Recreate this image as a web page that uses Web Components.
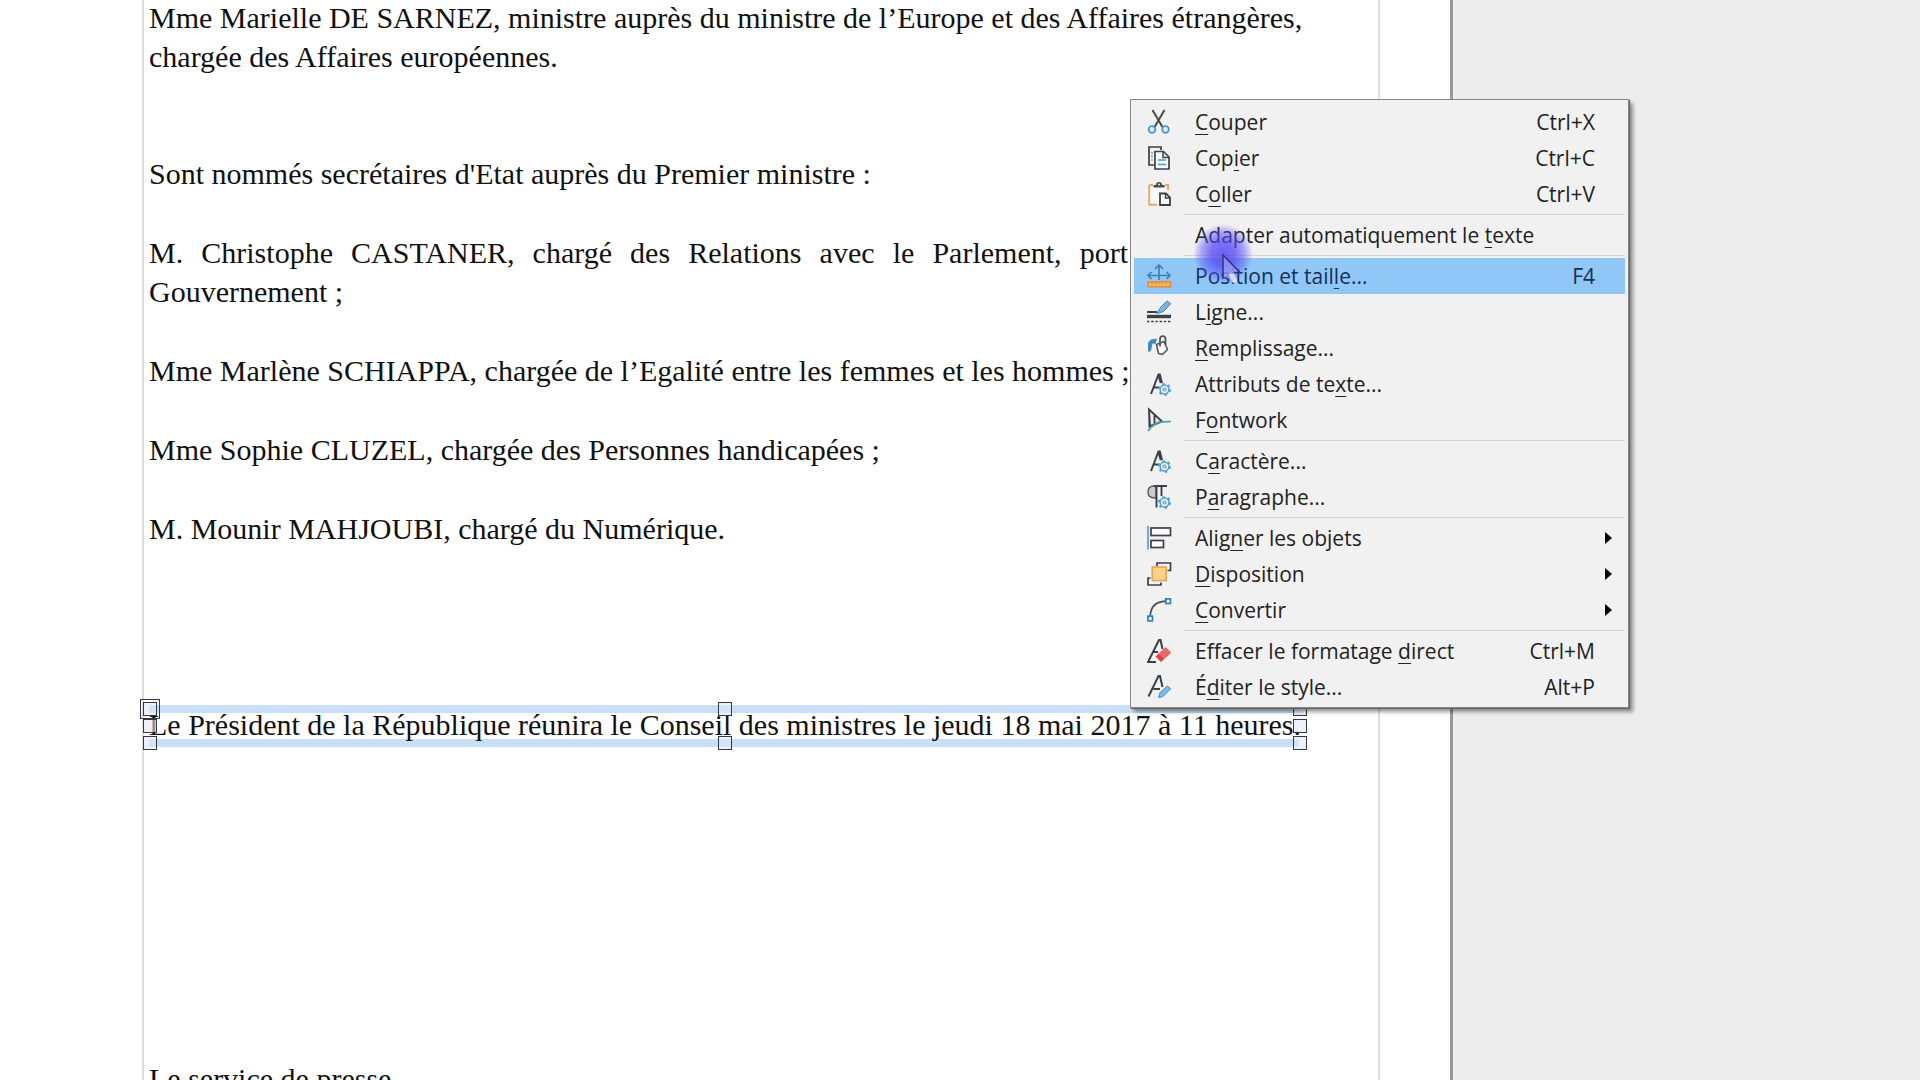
<!DOCTYPE html>
<html lang="fr">
<head>
<meta charset="utf-8">
<title>Communiqué</title>
<style>
  html, body { margin: 0; height: 100%; }
  body { overflow: hidden; background: #ededed; color: #111; }
</style>
</head>
<body>
<draw-workspace>
  <draw-page>
    <doc-paragraph>Mme Marielle DE SARNEZ, ministre auprès du ministre de l’Europe et des Affaires étrangères, chargée des Affaires européennes.</doc-paragraph>
    <doc-paragraph space="large">Sont nommés secrétaires d'Etat auprès du Premier ministre :</doc-paragraph>
    <doc-paragraph narrow>M. Christophe CASTANER, chargé des Relations avec le Parlement, port Gouvernement ;</doc-paragraph>
    <doc-paragraph>Mme Marlène SCHIAPPA, chargée de l’Egalité entre les femmes et les hommes ;</doc-paragraph>
    <doc-paragraph>Mme Sophie CLUZEL, chargée des Personnes handicapées ;</doc-paragraph>
    <doc-paragraph>M. Mounir MAHJOUBI, chargé du Numérique.</doc-paragraph>
    <selected-frame>Le Président de la République réunira le Conseil des ministres le jeudi 18 mai 2017 à 11 heures.</selected-frame>
    <doc-paragraph space="footer">Le service de presse</doc-paragraph>
  </draw-page>
  <context-menu slot="overlay">
    <menu-entry icon="cut" shortcut="Ctrl+X"><u>C</u>ouper</menu-entry>
    <menu-entry icon="copy" shortcut="Ctrl+C">Cop<u>i</u>er</menu-entry>
    <menu-entry icon="paste" shortcut="Ctrl+V">C<u>o</u>ller</menu-entry>
    <menu-line></menu-line>
    <menu-entry>Adapter automatiquement le <u>t</u>exte</menu-entry>
    <menu-line></menu-line>
    <menu-entry icon="position" shortcut="F4" active>Position et tail<u>l</u>e...</menu-entry>
    <menu-entry icon="line">L<u>i</u>gne...</menu-entry>
    <menu-entry icon="fill"><u>R</u>emplissage...</menu-entry>
    <menu-entry icon="char">Attributs de te<u>x</u>te...</menu-entry>
    <menu-entry icon="fontwork">F<u>o</u>ntwork</menu-entry>
    <menu-line></menu-line>
    <menu-entry icon="char">C<u>a</u>ractère...</menu-entry>
    <menu-entry icon="para">P<u>a</u>ragraphe...</menu-entry>
    <menu-line></menu-line>
    <menu-entry icon="align" submenu>Alig<u>n</u>er les objets</menu-entry>
    <menu-entry icon="arrange" submenu><u>D</u>isposition</menu-entry>
    <menu-entry icon="convert" submenu><u>C</u>onvertir</menu-entry>
    <menu-line></menu-line>
    <menu-entry icon="clear" shortcut="Ctrl+M">Effacer le formatage <u>d</u>irect</menu-entry>
    <menu-entry icon="style" shortcut="Alt+P">É<u>d</u>iter le style...</menu-entry>
  </context-menu>
  <mouse-pointer slot="overlay"></mouse-pointer>
</draw-workspace>
<script>
const gear = '<g fill="none" stroke="#4f9fd0"><circle cx="17.5" cy="17.5" r="4.4" stroke-width="1.5"/><circle cx="17.5" cy="17.5" r="1.5" stroke-width="1.2"/><circle cx="17.5" cy="17.5" r="5.7" stroke-width="1.8" stroke-dasharray="2.4 3.57"/></g>';
const slantA = '<path d="M4 22 L11.5 2.5 L12.8 2.5 L15 11 M7 15.5 H12.5" fill="none" stroke="#3c4148" stroke-width="2"/><path d="M11.6 2.5 L14 11" stroke="#3c4148" stroke-width="2.6"/>';
const ICONS = {
  cut: '<path d="M5.5 0 L15.4 17 M17.5 0 L7.6 17" fill="none" stroke="#4a4a4a" stroke-width="2"/><g fill="none" stroke="#3d9bd3" stroke-width="1.8"><circle cx="5" cy="19.5" r="3.3"/><circle cx="18.5" cy="19.5" r="3.3"/></g>',
  copy: '<path d="M7 19 H2 V1 H14 V4" fill="none" stroke="#3c4148" stroke-width="1.7"/><path d="M5 6 V16" stroke="#777" stroke-width="1.3" stroke-dasharray="1.6 2"/><path d="M8 5.5 H16.5 L22 11 V23 H8 Z" fill="#fafafa" stroke="#3c4148" stroke-width="1.7"/><path d="M16 6 V11.5 H22" fill="none" stroke="#3c4148" stroke-width="1.5"/><path d="M11 14 H19 M11 18.5 H19" stroke="#4099cf" stroke-width="1.7"/>',
  paste: '<path d="M3 4 H20 V10 H12 V22 H3 Z" fill="#fafafa"/><path d="M2.2 3 V22.8 H10 M2.2 3 H6 M18 3 H21 V8" fill="none" stroke="#e9a861" stroke-width="1.9"/><path d="M6.500 5.5 V3 H9 A2.8 2.8 0 0 1 15 3 H17.500 V5.5 Z" fill="#4a4a4a"/><circle cx="12" cy="2.4" r="1" fill="#eee"/><path d="M13 11.5 H19 L23 15.5 V23 H13 Z" fill="#fafafa" stroke="#3c4148" stroke-width="1.8"/><path d="M18.5 11.5 V16 H23" fill="none" stroke="#3c4148" stroke-width="1.4"/>',
  position: '<path d="M12 1 V16 M1 11.5 H23" stroke="#3f7fb5" stroke-width="1.7"/><path d="M8 5 L12 1 L16 5 M4.5 8 L1 11.5 L4.5 15 M19.5 8 L23 11.5 L19.5 15" fill="none" stroke="#3f7fb5" stroke-width="1.7"/><rect x="1" y="17.8" width="22.5" height="5" fill="#f5b566" stroke="#e58a2e" stroke-width="1.4"/><path d="M5 18 V20.5 M8.5 18 V20.5 M12 18 V20.5 M15.5 18 V20.5 M19 18 V20.5" stroke="#e58a2e"/>',
  line: '<path d="M0 12 H10" stroke="#3c4148" stroke-width="2"/><path d="M0 16.5 H24" stroke="#3c4148" stroke-width="3.4"/><path d="M0 21.5 H24" stroke="#3c4148" stroke-width="1.7" stroke-dasharray="2.4 1.8"/><path d="M10 13.5 L13 8 L20 .8 L23.7 3.8 L16.5 11.5 Z" fill="#7fb1de" stroke="#4b83b8"/>',
  fill: '<path d="M1 16 V6.5 L4 3.5 L10 2.5 L8.500 8 L5.500 7.5 L4 15 Z" fill="#3f8cc4"/><path d="M9.500 8.500 L17 5.500 L20.500 13.500 L15.500 18.500 L11.500 17.500 Z" fill="#fafafa" stroke="#55585e" stroke-width="1.6" stroke-linejoin="round"/><path d="M13 10.500 V3 Q13 .2 15.700 .2 Q18.500 .2 18.500 3 V9" fill="none" stroke="#55585e" stroke-width="1.8"/>',
  char: slantA + gear,
  fontwork: '<path d="M2 1.5 L15 13.5 L2.5 18.5 Z M2 1.5 L3 18 M7.5 6.5 L7.5 15.5" fill="none" stroke="#3c4148" stroke-width="1.9"/><path d="M1 23 Q7 14.5 15 13.8 L24 13.5" fill="none" stroke="#4c9f9f" stroke-width="1.7"/>',
  para: '<path d="M9 13 H7 Q1 12.5 1 7 Q1 1 7 1 H9 Z" fill="#c9cacc" stroke="#55585e" stroke-width="1.4"/><path d="M7 1 H20 M9.5 1 V22.5 M14.5 1 V11" fill="none" stroke="#3c4148" stroke-width="1.9"/>' + gear,
  align: '<path d="M1 0 V23.5" stroke="#4d9ccb" stroke-width="1.6"/><rect x="4" y="2" width="19.5" height="7.5" fill="#fafafa" stroke="#3c4148" stroke-width="1.7"/><rect x="4" y="14.5" width="12.5" height="7" fill="#fafafa" stroke="#3c4148" stroke-width="1.7"/>',
  arrange: '<path d="M10 4 V1 H23.5 V8.5 H20.5 M3.5 16 H1 V23 H14 V20.5" fill="none" stroke="#3c4148" stroke-width="1.7"/><rect x="5.2" y="5" width="14" height="13.5" fill="#fbd38c" stroke="#e9a04c" stroke-width="1.5"/>',
  convert: '<path d="M3.2 18 Q4 4 18.5 3.2" fill="none" stroke="#4a5058" stroke-width="1.7"/><rect x="18.8" y=".9" width="4.6" height="4.6" fill="#fafafa" stroke="#2f7fb8" stroke-width="1.7"/><rect x=".9" y="18.2" width="4.6" height="4.6" fill="#fafafa" stroke="#2f7fb8" stroke-width="1.7"/>',
  clear: '<path d="M1.5 22 L12 1 H13.5 L15.5 10 M6.5 13 H11 M0 23 H9" fill="none" stroke="#3c4148" stroke-width="2"/><path d="M8.5 17.5 L18.5 8.5 L24 13.5 L14 23 Z" fill="#dd4248"/><path d="M11.5 15 L17 20.3 L24 13.5 L18.5 8.5 Z" fill="#e9686b"/>',
  style: '<path d="M1.5 21.5 L11.5 1 H13 L15.5 12 M6.5 14 H13" fill="none" stroke="#3c4148" stroke-width="2"/><path d="M11.5 22.5 L13 17.5 L20.5 11 L23.7 13.8 L16 21.5 Z" fill="#7fb8e2" stroke="#4b8fc4"/>'
};

function define(name, html, setup) {
  const template = document.createElement('template');
  template.innerHTML = html;
  customElements.define(name, class extends HTMLElement {
    constructor() {
      super();
      this.attachShadow({ mode: 'open' }).append(template.content.cloneNode(true));
    }
    connectedCallback() { if (setup) setup(this, this.shadowRoot); }
  });
}

define('draw-workspace', `<style>
  :host { display: flex; position: relative; height: 100vh; overflow: hidden; background: #ededed; }
  .board { flex: 0 0 467px; }
  ::slotted(draw-page) { flex: 1 1 auto; }
</style><slot></slot><div class="board"></div><slot name="overlay"></slot>`);

define('draw-page', `<style>
  :host { display: flex; box-sizing: border-box; padding: 0 70px 0 142px; background: #fff; border-right: 3px solid #999; }
  main { display: flex; flex-direction: column; flex: 1; box-sizing: border-box; padding: 0 5px; border: solid #ddd; border-width: 0 2px;
    font: 30px/39px "Liberation Serif", serif; }
  .flow { display: flex; flex-direction: column; gap: 40px; margin-top: -2px; }
</style><main><div class="flow"><slot></slot></div></main>`);

define('doc-paragraph', `<style>
  :host { display: block; max-width: 1160px; }
  :host([space="large"]) { margin-top: 38px; }
  :host([space="footer"]) { margin-top: 275px; }
  p { margin: 0; }
  :host([narrow]) { max-width: 979px; }
  :host([narrow]) p { text-align: justify; }
</style><p><slot></slot></p>`);

define('selected-frame', `<style>
  :host { display: block; position: relative; width: 1150px; margin-top: 117px; }
  p { position: relative; margin: 0; white-space: nowrap; }
  .band { position: absolute; left: 0; right: 0; height: 8px; background: #c9dff5; }
  .band.t { top: 0; } .band.b { bottom: -3px; }
  i { position: absolute; box-sizing: border-box; width: 14px; height: 14px; border: 1px solid #333846; background: #dfe8f499; }
  .l { left: -6px; } .c { left: calc(50% - 6px); } .r { right: -8px; }
  .top { top: -3px; } .mid { top: 14px; } .bot { top: 31px; }
  .anchor { outline: 1px solid #333846; outline-offset: 2px; }
</style><div class="band t"></div><div class="band b"></div><p><slot></slot></p>
<i class="l top anchor"></i><i class="c top"></i><i class="r top"></i>
<i class="l mid"></i><i class="r mid"></i>
<i class="l bot"></i><i class="c bot"></i><i class="r bot"></i>`);

define('context-menu', `<style>
  :host { position: absolute; left: 1130px; top: 99px; width: 499px; box-sizing: border-box; padding: 4px 3px 2px;
    background: #f1f1f1; border: 1px solid #858585; box-shadow: 1px 1px 1px #666, 4px 4px 4px #0006;
    font: 21px/34px "Open Sans", "Noto Sans", sans-serif; color: #222; }
  :host { clip-path: inset(0 -10px -10px 0); }
  nav { display: flex; flex-direction: column; }
</style><nav role="menu"><slot></slot></nav>`);

define('menu-line', `<style>
  :host { display: flex; flex-direction: column; justify-content: center; height: 5px; padding-left: 50px; }
  hr { width: 100%; margin: 0; border: 0; border-top: 1px solid #d4d4d4; }
</style><hr>`);

define('menu-entry', `<style>
  :host { display: block; }
  button { display: flex; align-items: center; width: 100%; height: 36px; padding: 0 13px; border: 0; background: none;
    font: inherit; color: inherit; text-align: left; white-space: nowrap; }
  :host([active]) button { background: #91c7f6; color: #12305a; }
  svg { flex: none; overflow: visible; }
  .icon { width: 24px; height: 24px; margin-right: 24px; }
  .label { flex: 1; }
  .arrow { width: 7px; height: 12px; margin-left: 10px; visibility: hidden; }
  :host([submenu]) .arrow { visibility: visible; }
  ::slotted(u) { text-decoration-thickness: 1px; text-underline-offset: 4px; text-decoration-skip-ink: none; }
</style><button type="button" role="menuitem"><svg class="icon" viewBox="0 0 24 24" aria-hidden="true"></svg><span class="label"><slot></slot></span><span class="key"></span><svg class="arrow" viewBox="0 0 7 12" aria-hidden="true"><path d="M0 0 L7 6 L0 12 Z" fill="#000"/></svg></button>`,
(host, root) => {
  root.querySelector('.icon').innerHTML = ICONS[host.getAttribute('icon')] || '';
  root.querySelector('.key').textContent = host.getAttribute('shortcut') || '';
});

define('mouse-pointer', `<style>
  :host { position: absolute; left: 1193px; top: 224px; width: 60px; height: 60px; pointer-events: none;
    background: radial-gradient(circle closest-side, #4a3cf4cc 0, #4f42f4bb 40%, #5a50f477 72%, #6a60f400 100%); }
  svg { display: block; overflow: visible; }
</style><svg width="60" height="60" viewBox="0 0 60 60" aria-hidden="true"><path d="M30 31 V55 L35.500 50 L40 59 L44 57.500 L40.500 48.500 H47 Z" fill="#a9a6ee" fill-opacity=".6"/><path d="M30 55 V31 L47 48.500 H41" fill="none" stroke="#2c2e7c" stroke-width="1.400"/><path d="M35.500 50 L40 59 L44 57.500 L41 49.500 Z" fill="#eef" fill-opacity=".8"/></svg>`);
</script>
</body>
</html>
